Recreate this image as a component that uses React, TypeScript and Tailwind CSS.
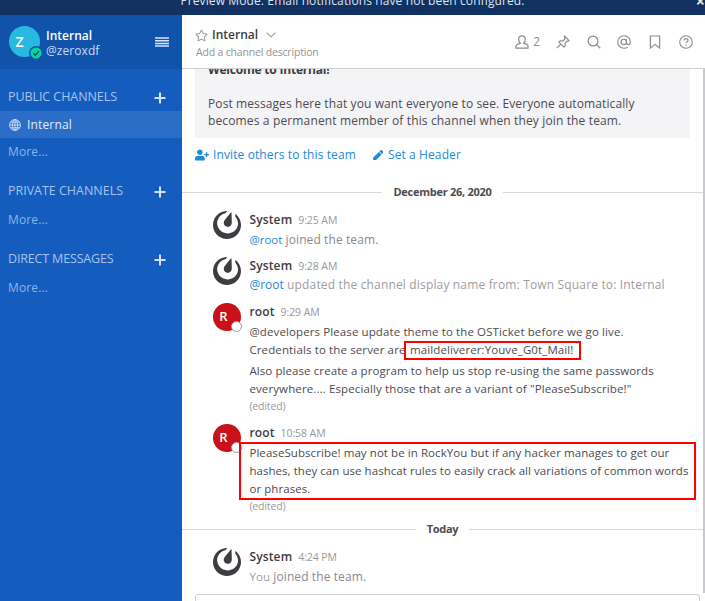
import type { ReactNode } from 'react';
import { FaUserPlus, FaPen, FaRegStar } from 'react-icons/fa';
import { SiMattermost } from 'react-icons/si';

function Plus() {
  return (
    <svg width="12" height="12" viewBox="0 0 12 12" className="text-[#d3e2f7]" stroke="currentColor" strokeWidth="2">
      <path d="M6 .5v11M.5 6h11" />
    </svg>
  );
}

function SidebarHeading({ children, className }: { children: string; className: string }) {
  return (
    <div className="flex h-[28px] items-center justify-between pr-[16px] pl-2 text-[12.5px] text-[#a5c3ec]">
      <span className={className}>{children}</span>
      <span className="pt-px"><Plus /></span>
    </div>
  );
}

function More() {
  return <div className="h-[27px] pl-2 text-[12px] leading-[27px] tracking-[0.13px] text-[#90b3e6]">More...</div>;
}

function Sidebar() {
  return (
    <aside className="flex w-[182px] shrink-0 flex-col bg-[#145dbf]">
      <header className="flex h-[54px] shrink-0 items-center bg-[#1153ab] pr-[13px] pl-[9px]">
        <div className="relative h-[31px] w-[31px] -translate-y-px rounded-full bg-[#27b9df] text-center">
          <span className="-ml-[10px] text-[14px] leading-[31px] font-semibold text-white">Z</span>
          <svg className="absolute -right-[3px] -bottom-[3px]" width="14" height="14" viewBox="0 0 14 14">
            <circle cx="7" cy="7" r="7" fill="#1153ab" />
            <circle cx="7" cy="7" r="5.6" fill="#08d49b" />
            <path d="M4.2 7.2 6.3 9.2 9.9 5.2" fill="none" stroke="#11506d" strokeWidth="1.5" />
          </svg>
        </div>
        <div className="ml-[6px] flex-1 pt-px text-[12px]">
          <div className="h-[15px] leading-[15px] font-semibold text-white">Internal</div>
          <div className="h-[15px] leading-[15px] tracking-[0.07px] text-[#cadbf3]">@zeroxdf</div>
        </div>
        <svg width="14" height="10" viewBox="0 0 14 10" className="text-[#d8e5f7]" stroke="currentColor" strokeWidth="1.5">
          <path d="M0 1h14M0 3.700h14M0 6.400h14M0 9.100h14" />
        </svg>
      </header>
      <div className="h-[14px] shrink-0" />
      <SidebarHeading className="tracking-[-0.07px]">PUBLIC CHANNELS</SidebarHeading>
      <div className="flex h-[27px] items-center bg-[#2c6dc7] pl-[9px] text-[12px]">
        <svg width="12" height="12" viewBox="0 0 12 12" fill="none" stroke="#cfe0f7" strokeWidth="0.9">
          <circle cx="6" cy="6" r="5.4" />
          <ellipse cx="6" cy="6" rx="2.5" ry="5.4" />
          <path d="M6 .6v10.8M.6 6h10.8M1.4 3.2h9.2M1.4 8.8h9.2" />
        </svg>
        <span className="ml-[6px] tracking-[0.16px] text-[#e3edf9]">Internal</span>
      </div>
      <More />
      <div className="h-[12px]" />
      <SidebarHeading className="tracking-[-0.02px]">PRIVATE CHANNELS</SidebarHeading>
      <div className="h-px" />
      <More />
      <div className="h-[12px]" />
      <SidebarHeading className="tracking-[-0.16px]">DIRECT MESSAGES</SidebarHeading>
      <div className="h-px" />
      <More />
    </aside>
  );
}

function ChannelHeader() {
  return (
    <header className="flex h-[54px] shrink-0 justify-between border-b border-[#cfcfd1] bg-white pr-[12px] pl-[13px]">
      <div className="pt-[12px]">
        <div className="flex h-[16px] items-center">
          <FaRegStar size={13} color="#a3a3a6" />
          <span className="ml-[4px] text-[12px] font-semibold text-[#3d3c40]">Internal</span>
          <svg className="ml-[8px]" width="10" height="6" viewBox="0 0 10 6" fill="none" stroke="#a3a3a6" strokeWidth="1.1">
            <path d="M.6.6 5 5 9.4.6" />
          </svg>
        </div>
        <div className="ml-px h-[18px] text-[10.5px] leading-[19px] tracking-[-0.18px] text-[#939296]">Add a channel description</div>
      </div>
      <div className="flex items-center gap-[17px] pt-px text-[#8b8a8d]">
        <div className="-mr-px flex items-center gap-[4px]">
          <svg width="14" height="14" viewBox="0 0 14 14" fill="none" stroke="currentColor" strokeWidth="1.2" strokeLinejoin="round">
            <path d="M7 .8C4.900.8 3.700 2.200 3.700 4.200c0 1.700.7 3.300 1.700 4.100C3.100 8.700 1 9.300 1 11v2.200h12V11c0-1.700-2.100-2.300-4.400-2.700 1-.8 1.700-2.400 1.700-4.100C10.300 2.200 9.100.8 7 .8Z" />
          </svg>
          <span className="text-[12px] leading-none">2</span>
        </div>
        <svg width="14" height="14" viewBox="0 0 14 14" fill="none" stroke="currentColor" strokeWidth="1.2" strokeLinejoin="round">
          <path d="m8.400.9 4.700 4.700-1.300.7-.8-.2-2 2.200.2 2.600-1.300 1.200-5-5 1.200-1.300 2.600.2 2.200-2-.2-.8ZM5.200 8.800.8 13.200" />
        </svg>
        <svg width="14" height="14" viewBox="0 0 14 14" fill="none" stroke="currentColor" strokeWidth="1.2">
          <circle cx="6" cy="6" r="4.900" />
          <path d="m9.600 9.600 3.700 3.600" />
        </svg>
        <svg className="-ml-px" width="14" height="14" viewBox="0 0 14 14" fill="none" stroke="currentColor" strokeWidth="1.1">
          <circle cx="6.800" cy="7" r="2.700" />
          <path d="M9.500 4.200v3.500c0 1.300.8 1.900 1.800 1.900 1.200 0 2-.9 2-2.600C13.300 3.400 10.500.7 7 .7S.7 3.500.7 7s2.800 6.300 6.300 6.300c1.500 0 2.800-.4 3.800-1.200" />
        </svg>
        <svg className="ml-px" width="12" height="14" viewBox="0 0 12 14" fill="none" stroke="currentColor" strokeWidth="1.2">
          <path d="M1.400 1h9.200v12L6 9.400 1.400 13Z" />
        </svg>
        <svg className="ml-px" width="14" height="14" viewBox="0 0 14 14" fill="none" stroke="currentColor" strokeWidth="1.1">
          <circle cx="7" cy="7" r="6.300" />
          <path d="M5 5.500c0-1.200.8-1.900 2-1.900s2 .7 2 1.700c0 1.400-2 1.500-2 3M7 9.500v1.300" />
        </svg>
      </div>
    </header>
  );
}

function Separator({ children, className }: { children: string; className: string }) {
  return (
    <div className={'flex shrink-0 items-center ' + className}>
      <div className="h-px flex-1 bg-[#dadadc]" />
      <span className="px-[11px] text-[11px] font-bold tracking-[-0.26px] text-[#4c4b4f]">{children}</span>
      <div className="h-px flex-1 bg-[#dadadc]" />
    </div>
  );
}

function SystemAvatar() {
  return (
    <div className="h-[28px] w-[28px] shrink-0">
      <SiMattermost size={28} color="#3d3c40" />
    </div>
  );
}

function RootAvatar() {
  return (
    <div className="relative h-[28px] w-[28px] shrink-0 rounded-full bg-[#c81118]">
      <span className="block w-[21px] text-center text-[13px] leading-[26px] font-semibold text-white">R</span>
      <span className="absolute -right-[1px] -bottom-[1px] h-[11px] w-[11px] rounded-full border border-[#9b9b9d] bg-white" />
    </div>
  );
}

function Post({ avatar, name, time, className, children }: { avatar: ReactNode; name: string; time: string; className: string; children: ReactNode }) {
  return (
    <div className={'flex shrink-0 pl-[31px] ' + className}>
      {avatar}
      <div className="ml-[8.400px] whitespace-nowrap">
        <div className="flex h-[18px] items-center gap-[6px] leading-[18px]">
          <span className="text-[12px] font-semibold tracking-[0.15px] text-[#3d3c40]">{name}</span>
          <span className="text-[10.5px] tracking-[-0.08px] text-[#98979b]">{time}</span>
        </div>
        {children}
      </div>
    </div>
  );
}

function Line({ children, className }: { children: string; className: string }) {
  return <div className={'h-[18px] text-[11.5px] leading-[18px] text-[#4c4b4f] ' + className}>{children}</div>;
}

function Edited() {
  return <div className="h-[17px] text-[10.5px] leading-[16px] tracking-[-0.15px] text-[#98979b]">(edited)</div>;
}

export default function App() {
  return (
    <div className="relative flex h-[601px] w-[705px] flex-col overflow-hidden bg-white font-['Open_Sans',sans-serif]">
      <div className="relative h-[15px] shrink-0 overflow-hidden bg-[#123163] text-center text-[12px] text-[#dfe5ee]">
        <div className="-mt-[8px] h-[18px] leading-[18px] tracking-[0.11px]">Preview Mode: Email notifications have not been configured.</div>
        <span className="absolute -top-[8px] right-0 text-[16px] leading-[18px] font-bold">×</span>
      </div>
      <div className="flex min-h-0 flex-1">
        <Sidebar />
        <main className="flex w-[523px] flex-col">
          <ChannelHeader />
          <div className="flex h-[524px] shrink-0 flex-col overflow-hidden border-r-2 border-[#c9c9cb]">
            <div className="ml-[13px] h-[69px] w-[495px] shrink-0 overflow-hidden bg-[#f4f3f6] pl-[13px] text-[12px] whitespace-nowrap text-[#4c4b4f]">
              <div className="-mt-[8px] h-[18px] leading-[18px] font-bold tracking-[-0.2px] text-[#3d3c40]">Welcome to Internal!</div>
              <div className="mt-[16px] h-[17px] leading-[17px] tracking-[0.1px]">Post messages here that you want everyone to see. Everyone automatically</div>
              <div className="h-[17px] leading-[17px] tracking-[0.14px]">becomes a permanent member of this channel when they join the team.</div>
            </div>
            <div className="flex h-[34px] shrink-0 items-center pl-[13px] text-[12px] text-[#2389d7]">
              <FaUserPlus size={14} />
              <span className="ml-[4px] tracking-[0.11px]">Invite others to this team</span>
              <FaPen className="ml-[17px]" size={10.500} />
              <span className="ml-[4.500px] tracking-[0.1px]">Set a Header</span>
            </div>
            <Separator className="h-[39px] pt-[2px]">December 26, 2020</Separator>
            <Post avatar={<SystemAvatar />} name="System" time="9:25 AM" className="h-[46px]">
              <div className="h-[20px] text-[12px] leading-[21px] tracking-[0.1px] text-[#8b8a8d]">
                <span className="text-[11.5px] tracking-normal text-[#2389d7]">@root</span> joined the team.
              </div>
            </Post>
            <Post avatar={<SystemAvatar />} name="System" time="9:28 AM" className="h-[46px]">
              <div className="h-[20px] text-[12px] leading-[20px] tracking-[0.16px] text-[#9e9da0]">
                <span className="tracking-normal text-[#2389d7]">@root</span> updated the channel display name from: Town Square to: Internal
              </div>
            </Post>
            <Post avatar={<RootAvatar />} name="root" time="9:29 AM" className="h-[121px]">
              <Line className="mt-[2px] tracking-[0.11px]">@developers Please update theme to the OSTicket before we go live.</Line>
              <div className="flex">
                <Line className="tracking-[0.13px]">Credentials to the server are</Line>
                <Line className="ml-[4.500px] tracking-[0.1px]">maildeliverer:Youve_G0t_Mail!</Line>
              </div>
              <Line className="mt-[3px] tracking-[0.09px]">Also please create a program to help us stop re-using the same passwords</Line>
              <Line className="tracking-[0.12px]">everywhere.... Especially those that are a variant of "PleaseSubscribe!"</Line>
              <Edited />
            </Post>
            <Post avatar={<RootAvatar />} name="root" time="10:58 AM" className="h-[92px]">
              <Line className="mt-[2px] tracking-[0.07px]">PleaseSubscribe! may not be in RockYou but if any hacker manages to get our</Line>
              <Line className="tracking-[0.05px]">hashes, they can use hashcat rules to easily crack all variations of common words</Line>
              <Line className="tracking-[0.07px]">or phrases.</Line>
              <Edited />
            </Post>
            <Separator className="h-[27px]">Today</Separator>
            <Post avatar={<SystemAvatar />} name="System" time="4:24 PM" className="mt-[5px] h-[40px]">
              <div className="h-[20px] text-[12px] leading-[21px] tracking-[0.1px] text-[#8b8a8d]">
                <span className="text-[11.5px] text-[#9e9da0]">You</span> joined the team.
              </div>
            </Post>
          </div>
          <div className="mt-px ml-[13px] h-[30px] w-[505px] shrink-0 rounded-[3px] border border-[#cfcfd1]" />
        </main>
      </div>
      <div className="absolute top-[341px] left-[404px] h-[19px] w-[177px] border-2 border-[#ff0000]" />
      <div className="absolute top-[442px] left-[239px] h-[58px] w-[457px] border-2 border-[#ff0000]" />
    </div>
  );
}
